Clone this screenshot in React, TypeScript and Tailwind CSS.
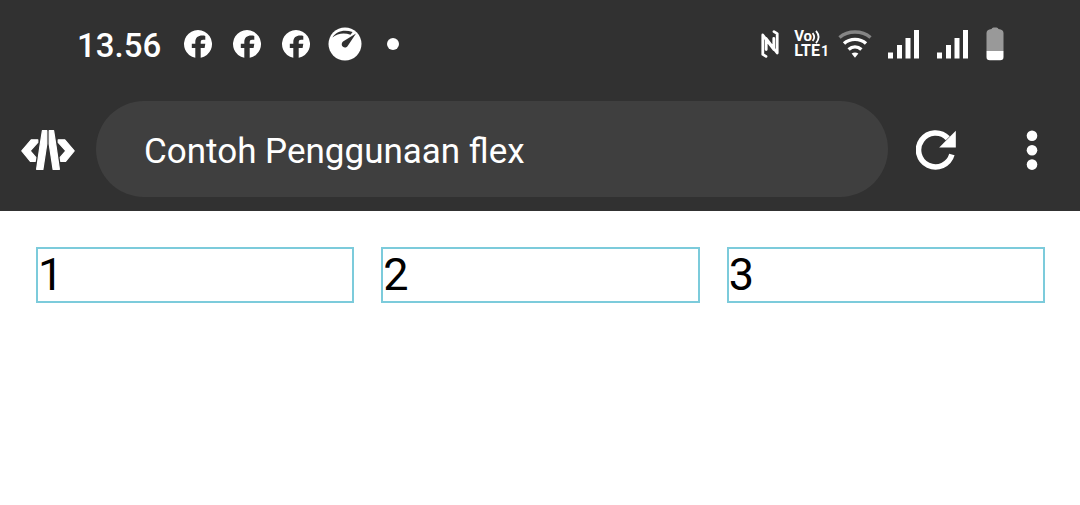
import React from "react";

function FacebookIcon() {
  return (
    <svg viewBox="0 0 28 28" className="size-7" aria-hidden="true">
      <path
        fill="#fff"
        d="M11.3 27.8A14 14 0 1 1 16.7 27.8V18h3.9l.7-4.2h-4.6v-1.6c0-1.7.7-2.5 2.4-2.5h2.2V5.9c-.8-.2-1.8-.3-3-.3-4.3 0-7 2.1-7 6.6v1.6H7.8V18h3.5z"
      />
    </svg>
  );
}

function GaugeIcon() {
  return (
    <svg viewBox="0 0 34 34" className="size-[34px]" aria-hidden="true">
      <circle cx="17" cy="17" r="16.5" fill="#fff" />
      <path d="M4.4 10.6C8 4.2 16 2 24.6 5L22.5 7.8C16 5.6 9.5 6.4 4.4 10.6z" fill="#313131" />
      <path d="M28 6.6L20 18.6A3.3 3.3 0 1 1 15 14.6z" fill="#313131" />
    </svg>
  );
}

function NfcIcon() {
  return (
    <svg viewBox="0 0 18 28" className="h-7 w-[18px]" aria-hidden="true">
      <path
        d="M5 26.4L1.8 24.4V5L12.8 19.4V8.5M13 1.6L16.2 3.6V23L5.2 8.6V19.5"
        fill="none"
        stroke="#fff"
        strokeWidth="2.8"
        strokeLinejoin="round"
        strokeLinecap="round"
      />
    </svg>
  );
}

function VolteIcon() {
  return (
    <span className="flex flex-col items-start font-bold text-white" aria-label="VoLTE 1">
      <span className="flex h-[13px] items-center text-[15px] leading-[13px]">
        Vo
        <svg viewBox="0 0 9 14" className="h-3.5 w-[9px]" aria-hidden="true">
          <path
            d="M.6 3Q3.8 7 .6 11M4 .8Q9.2 7 4 13.2"
            fill="none"
            stroke="#fff"
            strokeWidth="1.8"
          />
        </svg>
      </span>
      <span className="flex h-[15px] items-baseline text-[16px] leading-[15px]">
        LTE<span className="pl-px text-[14px]">1</span>
      </span>
    </span>
  );
}

function WifiIcon() {
  return (
    <svg viewBox="0 0 34 28" className="h-7 w-[34px]" aria-hidden="true">
      <g fill="none" strokeWidth="3.4">
        <path d="M1.5 7.5C10 .2 24 .2 32.5 7.5" stroke="#858585" />
        <path d="M6 13.5C12 8 22 8 28 13.5" stroke="#fff" />
        <path d="M10.6 19.6C14.4 16.2 19.6 16.2 23.4 19.6" stroke="#fff" />
      </g>
      <path d="M13.6 23.6Q17 21.6 20.4 23.6L17 27.8z" fill="#fff" />
    </svg>
  );
}

function SignalIcon() {
  return (
    <svg viewBox="0 0 31 29" className="h-[29px] w-[31px]" fill="#fff" aria-hidden="true">
      <rect x="0" y="22.5" width="5" height="6" />
      <rect x="9" y="15" width="5" height="13.5" />
      <rect x="17.5" y="8" width="5" height="20.5" />
      <rect x="26" y="0" width="5" height="28.5" />
    </svg>
  );
}

function BatteryIcon() {
  return (
    <svg viewBox="0 0 18 34" className="h-[34px] w-[18px]" aria-hidden="true">
      <path
        d="M5.5 2Q6 .5 7.5 .5H10.5Q12 .5 12.5 2Q17.5 2.4 17.5 6V24H.5V6Q.5 2.4 5.5 2z"
        fill="#999"
      />
      <path d="M.5 24H17.5V30Q17.5 33.3 14.2 33.3H3.8Q.5 33.3 .5 30z" fill="#fff" />
    </svg>
  );
}

function CodeLogo() {
  return (
    <svg viewBox="0 0 54 40" className="h-10 w-[54px]" fill="#fff" aria-hidden="true">
      <g stroke="#fff" strokeWidth="1.2" strokeLinejoin="round">
        <path d="M10.2 9.8H16.8V12.4L9.2 20.8L14.8 27.4L14.2 31.4H9.4L.8 20.8z" />
        <path d="M43.8 9.8H37.2V12.4L44.8 20.8L39.2 27.4L39.8 31.4H44.6L53.2 20.8z" />
        <path d="M21.4 .7H25.8V14L21.9 39.3H15.6L18.8 17z" />
        <path d="M32.6 .7H28.2V14L32.1 39.3H38.4L35.2 17z" />
      </g>
    </svg>
  );
}

function ReloadIcon() {
  return (
    <svg viewBox="0 0 40 40" className="size-10" fill="none" aria-hidden="true">
      <path d="M35.9 24.6A17 17 0 1 1 31.8 8.2" stroke="#fff" strokeWidth="5.6" />
      <path d="M39.8 .8V17.4H23.2z" fill="#fff" />
    </svg>
  );
}

function MoreIcon() {
  return (
    <svg viewBox="0 0 12 40" className="h-10 w-3" fill="#fff" aria-hidden="true">
      <circle cx="6" cy="5.8" r="5.3" />
      <circle cx="6" cy="20.2" r="5.3" />
      <circle cx="6" cy="34.6" r="5.3" />
    </svg>
  );
}

function StatusBar() {
  return (
    <div className="flex h-[88px] items-center justify-between pr-[76px] pl-[77px]">
      <div className="flex items-center">
        <time className="mr-[23px] pt-1 text-[33px] leading-10 font-medium text-white">13.56</time>
        <div className="flex items-center gap-[21px]">
          <FacebookIcon />
          <FacebookIcon />
          <FacebookIcon />
        </div>
        <div className="ml-[18px] flex items-center gap-[25px]">
          <GaugeIcon />
          <span className="size-3 rounded-full bg-white" />
        </div>
      </div>
      <div className="flex items-center">
        <div className="mr-4 flex items-center gap-[9px]">
          <div className="flex items-center gap-[15px]">
            <NfcIcon />
            <VolteIcon />
          </div>
          <WifiIcon />
        </div>
        <div className="flex items-center gap-[18px]">
          <SignalIcon />
          <SignalIcon />
          <BatteryIcon />
        </div>
      </div>
    </div>
  );
}

function Toolbar() {
  return (
    <div className="flex items-center px-[21px] pt-[13px] pb-3.5">
      <button type="button" aria-label="Editor" className="mr-[21px] pt-0.5">
        <CodeLogo />
      </button>
      <div className="flex h-24 flex-1 items-center rounded-full bg-[#3f3f3f] px-12">
        <h1 className="pt-1.5 text-[35px] leading-[48px] font-normal text-white">
          Contoh Penggunaan flex
        </h1>
      </div>
      <button type="button" aria-label="Reload" className="ml-7 pt-0.5">
        <ReloadIcon />
      </button>
      <button type="button" aria-label="More options" className="ml-[70px] pt-0.5 pr-[21px]">
        <MoreIcon />
      </button>
    </div>
  );
}

export default function App() {
  return (
    <div className="min-h-screen bg-white font-[Roboto,sans-serif]">
      <header className="bg-[#313131]">
        <StatusBar />
        <Toolbar />
      </header>
      <main className="flex gap-[27px] py-9 pr-[35px] pl-9">
        {[1, 2, 3].map((n) => (
          <div
            key={n}
            className="flex-1 border-2 border-[#7ccbdb] text-[45px] leading-[52px] text-black"
          >
            {n}
          </div>
        ))}
      </main>
    </div>
  );
}
